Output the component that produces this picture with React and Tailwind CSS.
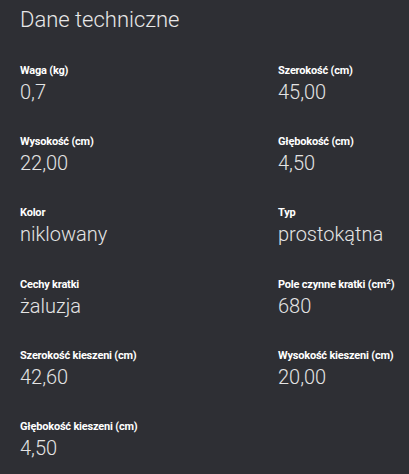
export default function App() {
  const items = [
    ["Waga (kg)", "0,7"],
    ["Szerokość (cm)", "45,00"],
    ["Wysokość (cm)", "22,00"],
    ["Głębokość (cm)", "4,50"],
    ["Kolor", "niklowany"],
    ["Typ", "prostokątna"],
    ["Cechy kratki", "żaluzja"],
    [<>Pole czynne kratki (cm<sup className="text-[8px] leading-none align-top relative top-[0px]">2</sup>)</>, "680"],
    ["Szerokość kieszeni (cm)", "42,60"],
    ["Wysokość kieszeni (cm)", "20,00"],
    ["Głębokość kieszeni (cm)", "4,50"],
  ];
  return (
    <div className="w-[409px] h-[474px] bg-[#2e2f34] pl-5 pt-[6px] overflow-hidden" style={{ fontFamily: "Roboto, sans-serif" }}>
      <h2 className="text-[22px] leading-[28px] font-light text-[#e8e8e8]">Dane techniczne</h2>
      <div className="grid grid-cols-[258px_1fr] gap-y-[30px] mt-[30px]">
        {items.map(([label, value], i) => (
          <div key={i} className="flex flex-col h-[41.2px]">
            <div className="text-[11px] leading-[14px] h-[14px] font-bold text-white tracking-[-0.2px] whitespace-nowrap">{label}</div>
            <div className="text-[20px] leading-[28px] font-light text-[#e4e4e4]">{value}</div>
          </div>
        ))}
      </div>
    </div>
  );
}
